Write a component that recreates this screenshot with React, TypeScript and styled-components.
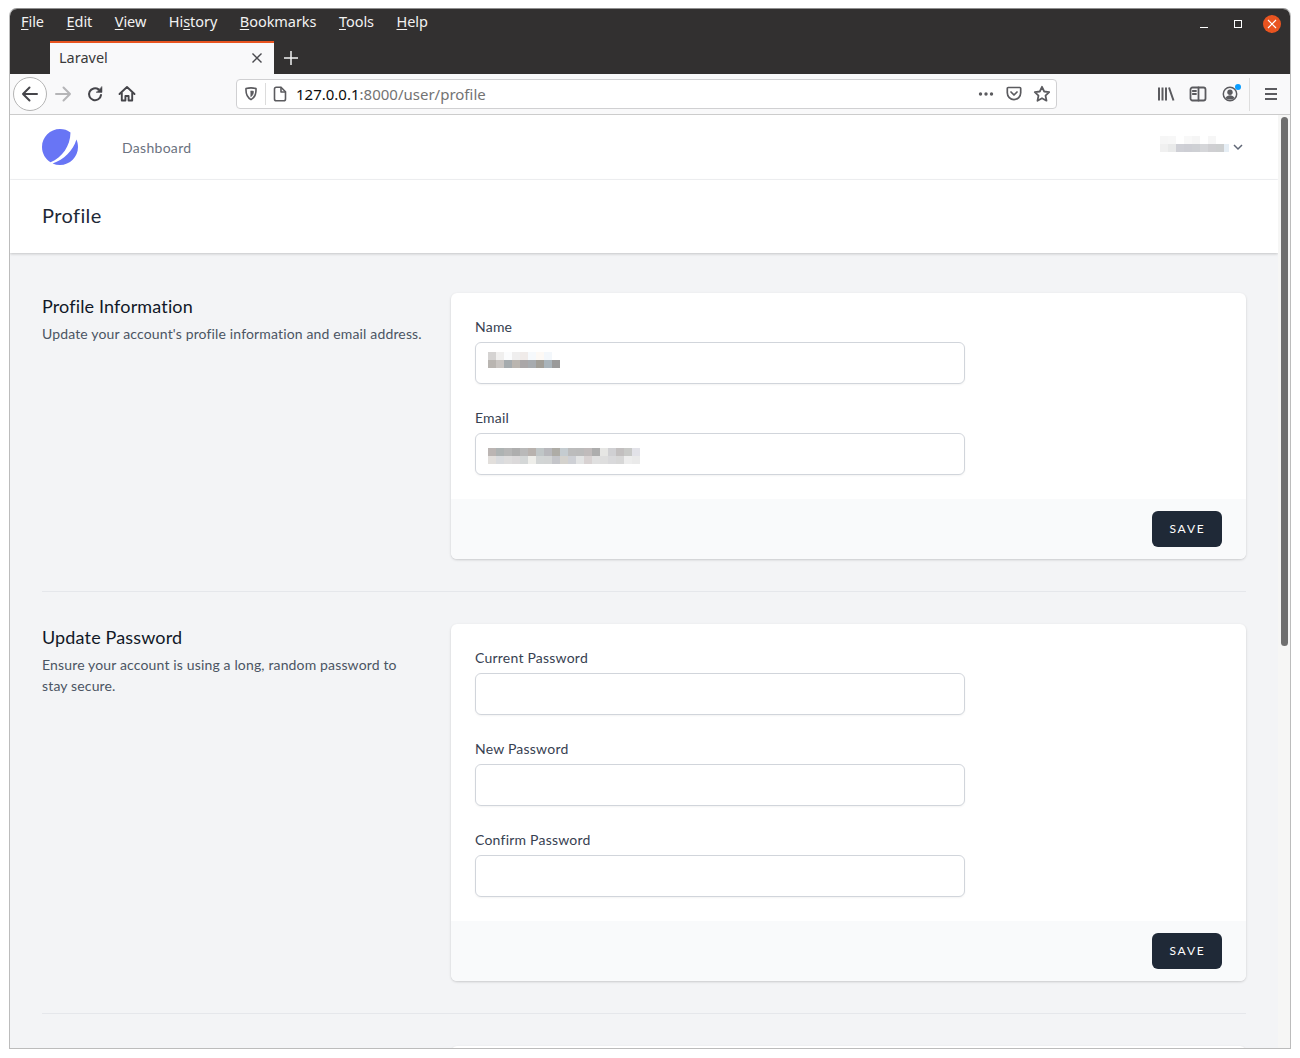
import React from 'react';
import styled, { createGlobalStyle } from 'styled-components';

const GlobalStyle = createGlobalStyle`
  html, body {
    margin: 0;
    padding: 0;
    height: 100%;
    background: #fff;
  }
  * { box-sizing: border-box; }
`;

const Screen = styled.div`
  width: 1300px;
  height: 1058px;
  padding: 8px 9px 9px;
  overflow: hidden;
`;

const Window = styled.div`
  display: flex;
  flex-direction: column;
  height: 100%;
  border: 1px solid #bcbcbc;
  border-top-color: #8f8f8f;
  border-radius: 8px 8px 0 0;
  overflow: hidden;
  background: #f9f9fa;
`;

/* browser chrome */
const TitleArea = styled.div`
  flex: none;
  height: 65px;
  background: #323030;
  color: #f2f2f2;
  font-family: "Noto Sans", sans-serif;
  font-size: 14.5px;
`;

const MenuRow = styled.div`
  display: flex;
  align-items: center;
  justify-content: space-between;
  height: 32px;
  padding: 0 9px 3px 11px;
`;

const MenuList = styled.div`
  display: flex;
  gap: 22.5px;
  margin-top: -6px;
`;

const MenuItem = styled.span`
  line-height: 20px;
  letter-spacing: -0.05px;
`;

const Key = styled.span`
  text-decoration: underline;
  text-underline-offset: 2px;
`;

const WindowButtons = styled.div`
  display: flex;
  align-items: center;
`;

const WindowButton = styled.div`
  display: flex;
  align-items: center;
  justify-content: center;
  width: 34px;
  height: 18px;
`;

const CloseDot = styled.div`
  display: flex;
  align-items: center;
  justify-content: center;
  width: 18px;
  height: 18px;
  margin: 0 0 0 8px;
  border-radius: 50%;
  background: #e95420;
`;

const TabRow = styled.div`
  display: flex;
  align-items: flex-end;
  height: 33px;
  padding-left: 40px;
`;

const Tab = styled.div`
  display: flex;
  align-items: center;
  justify-content: space-between;
  width: 224px;
  height: 33px;
  padding: 0 11px 2px 9px;
  border-top: 2px solid #e95420;
  background: #f9f9fa;
  color: #3a3a3a;
`;

const TabTitle = styled.span`
  margin-top: -2px;
`;

const NewTab = styled.div`
  display: flex;
  align-items: center;
  justify-content: center;
  width: 34px;
  height: 33px;
`;

const Toolbar = styled.div`
  flex: none;
  display: flex;
  align-items: center;
  height: 41px;
  padding-left: 3px;
  background: #f9f9fa;
  border-bottom: 1px solid #cccccc;
  font-family: "Noto Sans", sans-serif;
`;

const BackButton = styled.div`
  display: flex;
  align-items: center;
  justify-content: center;
  width: 34px;
  height: 34px;
  border: 1px solid #b4b4b4;
  border-radius: 50%;
  background: #fff;
`;

const ToolButton = styled.div`
  flex: none;
  display: flex;
  align-items: center;
  justify-content: center;
  width: 32px;
  height: 32px;
`;

const UrlBar = styled.div`
  flex: none;
  display: flex;
  align-items: center;
  width: 821px;
  height: 30px;
  margin: 0 93px;
  border: 1px solid #d0d0d2;
  border-radius: 4px;
  background: #fff;
`;

const UrlIcon = styled.div`
  flex: none;
  display: flex;
  align-items: center;
  justify-content: center;
  width: 28px;
  height: 28px;
`;

const UrlDivider = styled.div`
  flex: none;
  width: 1px;
  height: 22px;
  background: #dcdcdc;
`;

const UrlText = styled.div`
  flex: 1;
  margin-left: 2px;
  font-size: 15px;
  color: #737373;
  white-space: nowrap;
`;

const UrlHost = styled.span`
  color: #0c0c0d;
`;

const ToolDivider = styled.div`
  flex: none;
  width: 1px;
  height: 33px;
  margin: 0 5px 0 3px;
  background: #dedede;
`;

/* page */
const Viewport = styled.div`
  flex: 1;
  display: flex;
  min-height: 0;
`;

const Page = styled.div`
  flex: 1;
  min-width: 0;
  overflow: hidden;
  background: #f3f4f6;
  font-family: "Lato", sans-serif;
`;

const ScrollTrack = styled.div`
  flex: none;
  width: 12px;
  padding: 2px 2px 0 3px;
  background: #f6f6f5;
`;

const ScrollThumb = styled.div`
  height: 529px;
  border-radius: 4px;
  background: #6f6f6f;
`;

const TopNav = styled.nav`
  display: flex;
  align-items: center;
  justify-content: space-between;
  height: 65px;
  padding: 0 34px 0 32px;
  background: #fff;
  border-bottom: 1px solid #f3f4f6;
`;

const NavLeft = styled.div`
  display: flex;
  align-items: center;
`;

const NavLink = styled.a`
  margin-left: 44px;
  font-size: 14px;
  letter-spacing: 0.3px;
  color: #6b7280;
`;

const UserMenu = styled.div`
  display: flex;
  align-items: center;
  gap: 3px;
`;

const UserName = styled.div`
  width: 69px;
  margin-top: -6px;
  overflow: hidden;
`;

const PageHeader = styled.header`
  position: relative;
  height: 73px;
  padding: 24px 32px;
  background: #fff;
  box-shadow: 0 1px 3px rgba(0, 0, 0, 0.14), 0 1px 2px rgba(0, 0, 0, 0.06);
`;

const PageTitle = styled.h2`
  margin: 0;
  font-size: 20px;
  font-weight: 400;
  letter-spacing: 0.4px;
  line-height: 23px;
  color: #1f2937;
`;

const Main = styled.main`
  padding: 40px 32px 0;
`;

const Section = styled.section`
  display: grid;
  grid-template-columns: 385px 795px;
  column-gap: 24px;
`;

const SectionTitle = styled.h3`
  margin: 0;
  font-size: 18px;
  font-weight: 400;
  letter-spacing: 0.15px;
  line-height: 27px;
  color: #111827;
`;

const SectionText = styled.p`
  max-width: 382px;
  margin: 3px 0 0;
  font-size: 14px;
  letter-spacing: 0.15px;
  line-height: 21px;
  color: #4b5563;
`;

const Card = styled.div`
  border-radius: 6px;
  background: #fff;
  box-shadow: 0 1px 3px rgba(0, 0, 0, 0.12), 0 1px 2px rgba(0, 0, 0, 0.06);
  overflow: hidden;
`;

const CardBody = styled.div`
  display: flex;
  flex-direction: column;
  gap: 24px;
  padding: 24px;
`;

const Field = styled.div`
  width: 490px;
`;

const Label = styled.label`
  display: block;
  padding-bottom: 2px;
  font-size: 14px;
  letter-spacing: 0.22px;
  line-height: 19px;
  color: #374151;
`;

const InputBox = styled.div`
  position: relative;
  margin-top: 4px;
`;

const TextInput = styled.input`
  display: block;
  width: 100%;
  height: 42px;
  padding: 0 12px;
  border: 1px solid #d1d5db;
  border-radius: 6px;
  background: #fff;
  box-shadow: 0 1px 2px rgba(0, 0, 0, 0.05);
  outline: none;
`;

const InputBlur = styled.div<{ $top: number }>`
  position: absolute;
  left: 13px;
  top: ${(p) => p.$top}px;
`;

const CardFooter = styled.div`
  display: flex;
  justify-content: flex-end;
  padding: 12px 24px;
  background: #f9fafb;
`;

const SaveButton = styled.button`
  width: 70px;
  height: 36px;
  padding: 0 0 1px 1px;
  border: 0;
  border-radius: 6px;
  background: #1f2937;
  color: #fff;
  font-family: "Lato", sans-serif;
  font-size: 12px;
  letter-spacing: 1.8px;
`;

const Divider = styled.div`
  height: 1px;
  margin: 32px 0;
  background: #e5e7eb;
`;

const Pixels = styled.div<{ $cols: number }>`
  display: grid;
  grid-template-columns: repeat(${(p) => p.$cols}, 8px);
  grid-auto-rows: 8px;
`;

const Pixel = styled.div<{ $c: string }>`
  background: ${(p) => p.$c};
`;

const PixelBlur = ({ rows }: { rows: string[] }) => {
  const grid = rows.map((r) => r.split(' '));
  return (
    <Pixels $cols={grid[0].length}>
      {grid.flat().map((c, i) => (
        <Pixel key={i} $c={`#${c}`} />
      ))}
    </Pixels>
  );
};

const nameBlur = [
  'd5d3d2 f0efee fbfcfd efeeee f0ebe9 f6f9fc fdf9f5 f3f7fb ffffff',
  'b9b5b1 c9c5c2 a5abae bab5af aaa7a8 a7abaf a19e97 a9b4bb 9a9a9a',
];
const emailBlur = [
  'bbb5b3 aeb3b3 b6b6b6 aeaeae b9b9b9 b8b2ae c0c6c7 b8b8bc aeaca6 c5ccd0 bcbcbc bbbbbb c0bbbb adadad e6e6e4 d0d0d3 c2bfbf c8c9c7 e2e2e8',
  'e2dfdc d9dbde dedddd dbd9da d4d7d7 eeeeea d2d5d5 d2d4d4 c4c5c9 d4d2cd ced0d5 e3e4e4 d8d2d2 e0e0e0 dedede d9d9db d7d7d7 ededed eaeaea',
];
const userBlur = [
  'f6f6f6 f7f7f7 ffffff f8f8f8 f5f5f5 ffffff f6f6f6 ffffff ffffff',
  'f0f0f0 e9eaea cfd0d6 cdced4 ced0d4 d5d6d9 cfcfd2 cdcfd0 e6eef5',
];

const Icon = styled.svg<{ $color?: string; $weight?: number; $butt?: boolean }>`
  display: block;
  fill: none;
  stroke: ${(p) => p.$color ?? '#5b5b5f'};
  stroke-width: ${(p) => p.$weight ?? 1.7};
  stroke-linecap: ${(p) => (p.$butt ? 'butt' : 'round')};
  stroke-linejoin: round;
`;

const Logo = () => (
  <svg width="36" height="36" viewBox="0 0 48 48" fill="none">
    <path
      d="M11.395 44.428C4.557 40.198 0 32.632 0 24 0 10.745 10.745 0 24 0a23.891 23.891 0 0113.997 4.502c-.2 17.907-11.097 33.245-26.602 39.926z"
      fill="#6875F5"
    />
    <path
      d="M14.134 45.885A23.914 23.914 0 0024 48c13.255 0 24-10.745 24-24 0-3.516-.756-6.856-2.115-9.866-4.659 15.143-16.608 27.092-31.75 31.751z"
      fill="#6875F5"
    />
  </svg>
);

const ProfileForm = ({ title, lines, children }: { title: string; lines: React.ReactNode; children: React.ReactNode }) => (
  <Section>
    <div>
      <SectionTitle>{title}</SectionTitle>
      <SectionText>{lines}</SectionText>
    </div>
    <Card>
      <CardBody>{children}</CardBody>
      <CardFooter>
        <SaveButton>SAVE</SaveButton>
      </CardFooter>
    </Card>
  </Section>
);

const FormField = ({ label, type = 'text', blur, blurTop = 10 }: { label: string; type?: string; blur?: string[]; blurTop?: number }) => (
  <Field>
    <Label>{label}</Label>
    <InputBox>
      <TextInput type={type} />
      {blur && (
        <InputBlur $top={blurTop}>
          <PixelBlur rows={blur} />
        </InputBlur>
      )}
    </InputBox>
  </Field>
);

export default function App() {
  return (
    <Screen>
      <GlobalStyle />
      <Window>
        <TitleArea>
          <MenuRow>
            <MenuList>
              <MenuItem><Key>F</Key>ile</MenuItem>
              <MenuItem><Key>E</Key>dit</MenuItem>
              <MenuItem><Key>V</Key>iew</MenuItem>
              <MenuItem>Hi<Key>s</Key>tory</MenuItem>
              <MenuItem><Key>B</Key>ookmarks</MenuItem>
              <MenuItem><Key>T</Key>ools</MenuItem>
              <MenuItem><Key>H</Key>elp</MenuItem>
            </MenuList>
            <WindowButtons>
              <WindowButton>
                <svg width="10" height="10" viewBox="0 0 10 10"><rect x="1" y="8" width="8" height="1" fill="#fff" /></svg>
              </WindowButton>
              <WindowButton>
                <svg width="10" height="10" viewBox="0 0 10 10"><rect x="1.5" y="1.5" width="7" height="7" fill="none" stroke="#fff" /></svg>
              </WindowButton>
              <CloseDot>
                <svg width="10" height="10" viewBox="0 0 10 10"><path d="M1 1l8 8M9 1l-8 8" stroke="#fff" strokeWidth="1.2" /></svg>
              </CloseDot>
            </WindowButtons>
          </MenuRow>
          <TabRow>
            <Tab>
              <TabTitle>Laravel</TabTitle>
              <svg width="12" height="12" viewBox="0 0 12 12"><path d="M1.5 1.5l9 9M10.5 1.5l-9 9" stroke="#4a4a4f" strokeWidth="1.4" /></svg>
            </Tab>
            <NewTab>
              <svg width="14" height="14" viewBox="0 0 14 14"><path d="M7 0v14M0 7h14" stroke="#f2f2f2" strokeWidth="1.5" /></svg>
            </NewTab>
          </TabRow>
        </TitleArea>

        <Toolbar>
          <BackButton>
            <Icon width="18" height="18" viewBox="0 0 18 18" $color="#45454a" $weight={2}>
              <path d="M2 9h14M8.5 2.5L2 9l6.5 6.5" />
            </Icon>
          </BackButton>
          <ToolButton>
            <Icon width="18" height="18" viewBox="0 0 18 18" $color="#b5b5b7" $weight={2}>
              <path d="M2 9h14M9.5 2.5L16 9l-6.5 6.5" />
            </Icon>
          </ToolButton>
          <ToolButton>
            <Icon width="18" height="18" viewBox="0 0 18 18" $color="#45454a" $weight={2}>
              <path d="M15 10A6 6 0 1 1 12.6 4.4" />
              <path d="M16 1.8v5.6h-5.6z" fill="#45454a" strokeWidth="0.5" />
            </Icon>
          </ToolButton>
          <ToolButton>
            <Icon width="18" height="18" viewBox="0 0 18 18" $color="#45454a" $weight={1.9}>
              <path d="M1.5 9L9 2l7.5 7M3.8 8v7.5h3.6V11h3.2v4.500h3.6V8" />
            </Icon>
          </ToolButton>

          <UrlBar>
            <UrlIcon>
              <Icon width="16" height="16" viewBox="0 0 16 16" $weight={1.6}>
                <path d="M3 2.6c3.3-.9 6.7-.9 10 0 .3 5.4-1.4 9.2-5 11-3.6-1.8-5.3-5.6-5-11z" />
                <path d="M8 5c.9 0 1.7.1 2.5.3 0 2.5-.8 4.3-2.5 5.3z" fill="#5b5b5f" strokeWidth="0.6" />
              </Icon>
            </UrlIcon>
            <UrlDivider />
            <UrlIcon>
              <Icon width="16" height="16" viewBox="0 0 16 16" $weight={1.6}>
                <path d="M2.5 3a1.8 1.8 0 0 1 1.8-1.8h4.7L13.5 5.7v7.3a1.8 1.8 0 0 1-1.8 1.8H4.3A1.8 1.8 0 0 1 2.5 13z" />
                <path d="M9 1.5v4.5h4.3" />
              </Icon>
            </UrlIcon>
            <UrlText>
              <UrlHost>127.0.0.1</UrlHost>:8000/user/profile
            </UrlText>
            <UrlIcon>
              <svg width="16" height="16" viewBox="0 0 16 16" fill="#5b5b5f">
                <circle cx="2.5" cy="8" r="1.7" />
                <circle cx="8" cy="8" r="1.7" />
                <circle cx="13.5" cy="8" r="1.7" />
              </svg>
            </UrlIcon>
            <UrlIcon>
              <Icon width="16" height="16" viewBox="0 0 16 16">
                <path d="M2.2 1.5h11.6c.5 0 .9.4.9.9v4.4c0 3.7-3 6.8-6.7 6.8s-6.7-3.1-6.7-6.8V2.4c0-.5.4-.9.9-.9z" />
                <path d="M5 6l3 3 3-3" />
              </Icon>
            </UrlIcon>
            <UrlIcon>
              <Icon width="18" height="18" viewBox="0 0 18 18" $weight={1.8}>
                <path d="M9 1.8l2.2 4.7 5 .6-3.7 3.5 1 5.1L9 13.2l-4.5 2.5 1-5.1L1.8 7.1l5-.6z" />
              </Icon>
            </UrlIcon>
          </UrlBar>

          <ToolButton>
            <Icon width="18" height="18" viewBox="0 0 18 18" $weight={2} $butt>
              <path d="M2 2.5v13M5.5 2.5v13M9 2.5v13M12 2.5l4.5 13" />
            </Icon>
          </ToolButton>
          <ToolButton>
            <Icon width="18" height="18" viewBox="0 0 18 18" $weight={1.8}>
              <rect x="1.5" y="2.5" width="15" height="13" rx="2" />
              <path d="M9.5 2.5v13" />
              <path d="M3.8 6h3.2M3.8 9h3.2" />
            </Icon>
          </ToolButton>
          <ToolButton>
            <svg width="24" height="24" viewBox="0 0 24 24" fill="none">
              <circle cx="12" cy="12" r="6.7" stroke="#5b5b5f" strokeWidth="1.5" />
              <circle cx="12" cy="10.3" r="2.7" fill="#5b5b5f" />
              <path d="M7.5 16c1-2 2.7-2.8 4.5-2.8s3.5.8 4.5 2.8c-1.2 1-2.8 1.5-4.5 1.5s-3.300-.5-4.500-1.500z" fill="#5b5b5f" />
              <circle cx="20" cy="5" r="3" fill="#0a9dff" />
            </svg>
          </ToolButton>
          <ToolDivider />
          <ToolButton>
            <Icon width="16" height="16" viewBox="0 0 16 16" $weight={1.8} $butt>
              <path d="M2 3h12M2 8h12M2 13h12" />
            </Icon>
          </ToolButton>
        </Toolbar>

        <Viewport>
          <Page>
            <TopNav>
              <NavLeft>
                <Logo />
                <NavLink>Dashboard</NavLink>
              </NavLeft>
              <UserMenu>
                <UserName>
                  <PixelBlur rows={userBlur} />
                </UserName>
                <svg width="12" height="12" viewBox="0 0 12 12" fill="none">
                  <path d="M2 4l4 4 4-4" stroke="#5f6675" strokeWidth="1.5" />
                </svg>
              </UserMenu>
            </TopNav>
            <PageHeader>
              <PageTitle>Profile</PageTitle>
            </PageHeader>
            <Main>
              <ProfileForm
                title="Profile Information"
                lines="Update your account's profile information and email address."
              >
                <FormField label="Name" blur={nameBlur} />
                <FormField label="Email" blur={emailBlur} blurTop={15} />
              </ProfileForm>
              <Divider />
              <ProfileForm
                title="Update Password"
                lines="Ensure your account is using a long, random password to stay secure."
              >
                <FormField label="Current Password" type="password" />
                <FormField label="New Password" type="password" />
                <FormField label="Confirm Password" type="password" />
              </ProfileForm>
              <Divider />
              <Section>
                <div />
                <Card>
                  <CardBody />
                </Card>
              </Section>
            </Main>
          </Page>
          <ScrollTrack>
            <ScrollThumb />
          </ScrollTrack>
        </Viewport>
      </Window>
    </Screen>
  );
}
